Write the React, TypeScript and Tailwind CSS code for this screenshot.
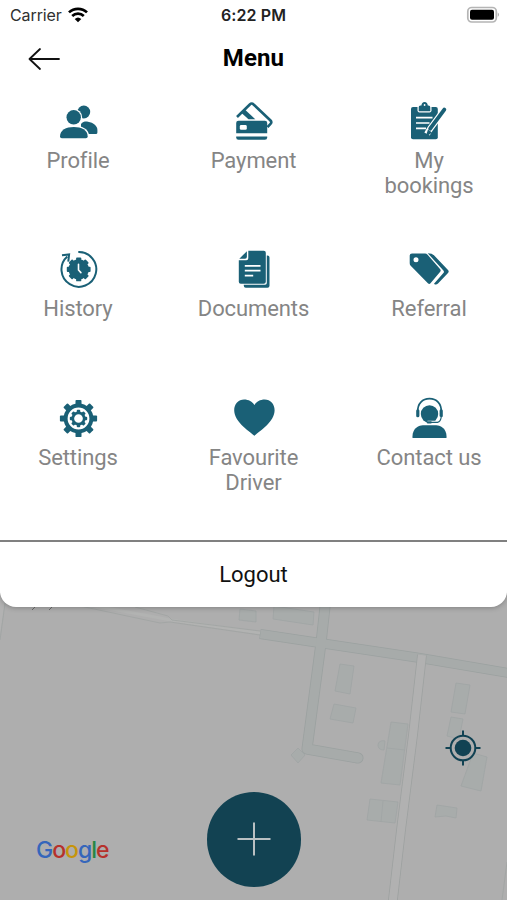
import type { ReactNode } from 'react';

const TEAL = '#1a6076';

function Glyph({ children }: { children: ReactNode }) {
  return (
    <svg className="h-11 w-11 shrink-0" viewBox="0 0 44 44" fill={TEAL}>
      {children}
    </svg>
  );
}

function ProfileIcon() {
  return (
    <Glyph>
      <circle cx="27.8" cy="13" r="6.4" />
      <path d="M25 25c2-2.500 4.500-2.700 7-2.300 5.500.8 9.600 4.300 9.400 8.300v2.500q0 1.500-1.500 1.500H25z" />
      <circle cx="17.700" cy="18.300" r="8.400" fill="#fff" />
      <path d="M2.800 39v-2.500C3 30 9.500 26.800 17.700 26.800S32.800 30 33 36.500V39z" fill="#fff" />
      <circle cx="17.700" cy="18.300" r="7.200" />
      <path d="M4 37.500c0-6.500 6-9.500 13.800-9.500s13.900 3 13.900 9.500q0 1.800-1.800 1.800H5.800Q4 39.300 4 37.500z" />
    </Glyph>
  );
}

function PaymentIcon() {
  return (
    <Glyph>
      <path d="M5 18 17.800 5.500q1.900-1.900 3.800 0L38.500 21.500q1.600 1.700 0 3.400l-3 3.200" fill="none" stroke={TEAL} strokeWidth="2.600" />
      <path d="m9.200 13.800 3.600-3.200 10.500 9.700h-6.800z" />
      <path d="M4.200 34.300V24q0-2.300 2.300-2.300h26.400q2.300 0 2.300 2.300v10.300z" />
      <rect x="7.800" y="26" width="7" height="4.800" rx="1.400" fill="#fff" />
      <path d="M4.200 37.500h31v1q0 2.300-2.300 2.300H6.500q-2.300 0-2.300-2.300z" />
    </Glyph>
  );
}

function BookingsIcon() {
  return (
    <Glyph>
      <rect x="4" y="8" width="26.800" height="32.300" rx="2" />
      <path d="M10.500 7.500h14v4q0 2-2 2h-10q-2 0-2-2z" fill="#fff" />
      <path d="M11.700 8.200q0-1.700 1.700-1.700h1q.3-3.600 3.200-3.600t3.200 3.600h.8q1.700 0 1.700 1.700v4H11.700z" />
      <circle cx="17.600" cy="6" r=".9" fill="#fff" />
      <path d="M9 18.700h16.500M9 24h13.500M9 29.300h10" stroke="#fff" strokeWidth="1.700" />
      <path d="M37.300 10.600 23.200 29.600 20 35" stroke="#fff" strokeWidth="6.200" />
      <path d="m37.300 10.600-14.100 19" stroke={TEAL} strokeWidth="3.900" strokeLinecap="round" />
      <path d="m21 30.500 4 3-4.700 3.600-1.200-.9z" />
    </Glyph>
  );
}

function Teeth({ count, cx, cy, r, width, height, offset = 0 }: { count: number; cx: number; cy: number; r: number; width: number; height: number; offset?: number }) {
  return (
    <>
      {Array.from({ length: count }, (_, i) => (
        <rect
          key={i}
          x={cx - width / 2}
          y={cy - r}
          width={width}
          height={height}
          rx=".9"
          transform={`rotate(${offset + (i * 360) / count} ${cx} ${cy})`}
        />
      ))}
    </>
  );
}

function HistoryIcon() {
  return (
    <Glyph>
      <path d="M22.300 5A17.400 17.400 0 1 1 11.300 9.400" fill="none" stroke={TEAL} strokeWidth="2" />
      <path d="m6 8.200 7.100-.8-.8 7.200" fill="none" stroke={TEAL} strokeWidth="2" />
      <circle cx="22.700" cy="22.400" r="10.200" />
      <Teeth count={8} cx={22.7} cy={22.4} r={11.900} width={5.200} height={6} />
      <path d="M22.500 17.300v5.700l2.400 2.600" fill="none" stroke="#fff" strokeWidth="1.600" strokeLinecap="round" />
    </Glyph>
  );
}

function DocumentsIcon() {
  return (
    <Glyph>
      <path d="M11 8.400h24.500q2 0 2 2v28.400q0 2-2 2H13.800q-2 0-2-2z" />
      <path d="M6.800 12.500 15.300 3H33q1.800 0 1.800 2.500V36q0 1.800-1.800 1.800H8.800z" fill="#fff" />
      <path d="M16.300 3.800h15.500q2 0 2 2v29q0 2-2 2h-23q-2 0-2-2V13.200h7.500q2 0 2-2z" />
      <path d="M14.900 4.300v5.500q0 1.900-1.900 1.900H7.300z" />
      <path d="M12.800 18.800h15.700M12.800 23.600h15.700M12.800 28.700h8.400" stroke="#fff" strokeWidth="1.700" />
    </Glyph>
  );
}

function ReferralIcon() {
  return (
    <Glyph>
      <path
        fillRule="evenodd"
        d="M5 6.500h13q1.500 0 2.600 1.200L33 22q1.400 1.500 0 3l-9.500 11.300q-1.200 1.400-2.600 0L3.700 18.700q-1-1-1-2.500V8.800q0-2.300 2.300-2.300zM9 10.300a2.500 2.500 0 1 0 0 5 2.500 2.500 0 0 0 0-5z"
      />
      <path d="M20.700 6.200q4.500.1 6.500 2.200L41 22.900q1.400 1.500 0 3L31 36.500q-2 2-4 .2L36.400 26q1.100-1.300 0-2.600z" />
    </Glyph>
  );
}

function SettingsIcon() {
  return (
    <Glyph>
      <circle cx="22.500" cy="22.500" r="12.900" fill="none" stroke={TEAL} strokeWidth="4" />
      <Teeth count={8} cx={22.5} cy={22.5} r={18.600} width={6} height={6} />
      <circle cx="22.500" cy="22.500" r="5.700" fill="none" stroke={TEAL} strokeWidth="2.700" />
      <Teeth count={8} cx={22.5} cy={22.5} r={8.700} width={3.500} height={3} />
    </Glyph>
  );
}

function HeartIcon() {
  return (
    <Glyph>
      <path d="M22.400 39.800C16 34.500 2.200 25.300 2.200 14.300 2.200 8 6.500 3.500 12.100 3.500c4.500 0 8.200 2.200 10.300 5.500 2.100-3.300 5.800-5.500 10.300-5.500 5.600 0 9.900 4.500 9.900 10.800 0 11-13.800 20.200-20.200 25.500z" />
    </Glyph>
  );
}

function ContactIcon() {
  return (
    <Glyph>
      <path d="M10.800 15.500C10.500 7.500 15.500 2.700 22.500 2.700S34.500 7.500 34.200 15.500" fill="none" stroke={TEAL} strokeWidth="1.700" />
      <rect x="9.200" y="13.200" width="3.200" height="8" rx="1.500" />
      <rect x="32.600" y="13.200" width="3.200" height="8" rx="1.500" />
      <circle cx="22.500" cy="18" r="8.700" />
      <path d="M20.500 26.300h9.500q3.800-.6 4.200-5.300" fill="none" stroke="#fff" strokeWidth="3.200" />
      <path d="M23.500 26.300h7q3.300-.7 3.700-5.300" fill="none" stroke={TEAL} strokeWidth="1.200" />
      <rect x="19.800" y="25.300" width="5" height="2.100" rx="1" />
      <path d="M5.500 41.900v-1.600C5.500 33.500 10.500 29.300 16 29.300h13c5.500 0 10.500 4.200 10.500 11v1.600z" />
    </Glyph>
  );
}

const items = [
  { label: ['Profile'], Icon: ProfileIcon },
  { label: ['Payment'], Icon: PaymentIcon },
  { label: ['My', 'bookings'], Icon: BookingsIcon },
  { label: ['History'], Icon: HistoryIcon },
  { label: ['Documents'], Icon: DocumentsIcon },
  { label: ['Referral'], Icon: ReferralIcon },
  { label: ['Settings'], Icon: SettingsIcon },
  { label: ['Favourite', 'Driver'], Icon: HeartIcon },
  { label: ['Contact us'], Icon: ContactIcon },
];

function StatusBar() {
  return (
    <div className="grid h-[30px] grid-cols-3 items-center pl-[10px] pr-[7px] font-['Inter',sans-serif] text-[16px] text-black">
      <div className="flex items-center gap-[6px] text-[#303030]">
        <span className="tracking-[-0.1px]">Carrier</span>
        <svg className="h-[16px] w-[20px]" viewBox="0 0 20 16" fill="none" stroke="#000" strokeWidth="2.700">
          <path d="M1 5.400a13 13 0 0 1 18 0M4.200 9a8.400 8.400 0 0 1 11.600 0" />
          <path d="M10 15.300 6.700 12a4.800 4.800 0 0 1 6.600 0z" fill="#000" stroke="none" />
        </svg>
      </div>
      <span className="-ml-[3px] text-center font-semibold tracking-[0.1px] text-[#222]">6:22 PM</span>
      <svg className="h-[18px] w-[34px] justify-self-end" viewBox="0 0 34 18">
        <rect x="1.800" y="1.500" width="28.500" height="14.500" rx="4" fill="#fff" stroke="#b5b5b5" strokeWidth="1.700" />
        <rect x="4" y="3.800" width="24" height="10" rx="2" fill="#000" />
        <path d="M31.800 6.500q2 2.200 0 4.500z" fill="#999" />
      </svg>
    </div>
  );
}

function StreetMap() {
  return (
    <svg className="h-full w-full" viewBox="0 593 507 307" fill="none">
      <rect y="593" width="507" height="307" fill="#aeaeae" />
      <path d="M0 593h6L0 634z" fill="#b2b2b2" />
      <path d="M5.500 600 0 640" stroke="#a2a6a5" />
      <path d="M80 603 160 618l10 2 92 13" stroke="#b2b3b2" strokeWidth="3" />
      <g stroke="#9fa3a2" strokeWidth=".8">
        <path d="m80 606 80 17 10-1 90 13M135 607l33 9 4 4 88 11" />
        <path d="M507 862 502 900" />
      </g>
      <g stroke="#9ba1a0" strokeLinejoin="round">
        <path d="M260 634 320 643 420 658 520 675" strokeWidth="10" />
        <path d="m326 598-5 45-14 106 51 9" strokeWidth="11" strokeLinecap="round" />
      </g>
      <g stroke="#a7abaa" strokeLinejoin="round">
        <path d="M260.500 634 320 643 420 658 520 675" strokeWidth="8.400" />
        <path d="m326 598-5 45-14 106 51 9" strokeWidth="9.400" strokeLinecap="round" />
      </g>
      <path d="M422 655 413 735 401 830 392 908" stroke="#9da1a0" strokeWidth="9.700" />
      <path d="M422 655 413 735 401 830 392 908" stroke="#b1b1b1" strokeWidth="8.100" />
      <g fill="#a8acab" stroke="#a0a5a4" strokeWidth=".8">
        <path d="m274 606 40 6-1 13-40-6zM240 609l16 2v11l-17-2zM340 664l14 2-4 28-15-3zM334 704l22 4-3 15-23-4z" />
        <path d="m456 683 14 2-5 29-14-2zM451 717l12 2-4 20-12-3zM473 753l14 4-6 34-20-5z" />
        <path d="m391 722 17 2-8 61-19-2zM370 799l28 3-3 21-28-3zM383 801l-2 21M387 748l18 2M437 805l20 3-1 10-10-2-11 1zM298 748l7 7-7 8-7-8zM385 741c-4-1-7 1-7 4s2 5 6 5z" />
      </g>
      <path d="m35 607-3 3M52 607l-3 3" stroke="#6c6c6c" />
    </svg>
  );
}

export default function App() {
  return (
    <div className="flex h-[900px] w-[507px] flex-col overflow-hidden bg-white font-['Roboto',sans-serif]">
      <section className="relative z-10 h-[607px] shrink-0 rounded-b-[16px] bg-white shadow-[0_1px_5px_rgba(0,0,0,0.25)]">
        <StatusBar />
        <header className="grid h-[56px] grid-cols-3 items-center">
          <svg className="ml-[28px] mt-[2px] h-[24px] w-[32px]" viewBox="0 0 32 24" fill="none" stroke="#111" strokeWidth="1.800" strokeLinecap="round" strokeLinejoin="round">
            <path d="M31 12H1.500M12 2 1.500 12 12 22" />
          </svg>
          <h1 className="text-center text-[24px] font-bold tracking-[0.1px] text-black">Menu</h1>
        </header>
        <nav className="grid h-[454px] grid-cols-[156px_195px_156px] grid-rows-[148.250px_148.250px_148.250px] pt-[13px]">
          {items.map(({ label, Icon }) => (
            <button key={label.join(' ')} className="flex flex-col items-center gap-[5px]">
              <Icon />
              <span className="text-[22px] leading-[25px] tracking-[-0.1px] text-[#858585]">
                {label.map((line) => (
                  <span key={line} className="block">{line}</span>
                ))}
              </span>
            </button>
          ))}
        </nav>
        <button className="flex h-[67px] w-full items-center justify-center border-t-2 border-[#808080] pb-[1px] text-[22px] text-[#111]">
          Logout
        </button>
      </section>
      <section className="relative -mt-[14px] h-[307px] shrink-0">
        <StreetMap />
        <svg className="absolute left-[445px] top-[137px] h-[36px] w-[36px]" viewBox="0 0 36 36" fill="none" stroke="#114253" strokeWidth="2">
          <circle cx="18" cy="18" r="12.300" />
          <circle cx="18" cy="18" r="8.300" fill="#114253" stroke="none" />
          <path d="M18 .5V6M18 30v5.500M.5 18H6M30 18h5.500" />
        </svg>
        <button className="absolute left-[207px] top-[199px] flex h-[94.500px] w-[94px] items-center justify-center rounded-full bg-[#124252]">
          <svg className="h-[34px] w-[34px]" viewBox="0 0 34 34" stroke="#b9c0c2" strokeWidth="2">
            <path d="M17 .5v33M.5 17h33" />
          </svg>
        </button>
        <div className="absolute left-[36px] top-[241px] font-['Inter',sans-serif] text-[23px] font-medium leading-[32px] tracking-[-1px]">
          <span className="text-[#3566bb]">G</span>
          <span className="text-[#b6312b]">o</span>
          <span className="text-[#c6940b]">o</span>
          <span className="text-[#3566bb]">g</span>
          <span className="text-[#258743]">l</span>
          <span className="text-[#b6312b]">e</span>
        </div>
      </section>
    </div>
  );
}
